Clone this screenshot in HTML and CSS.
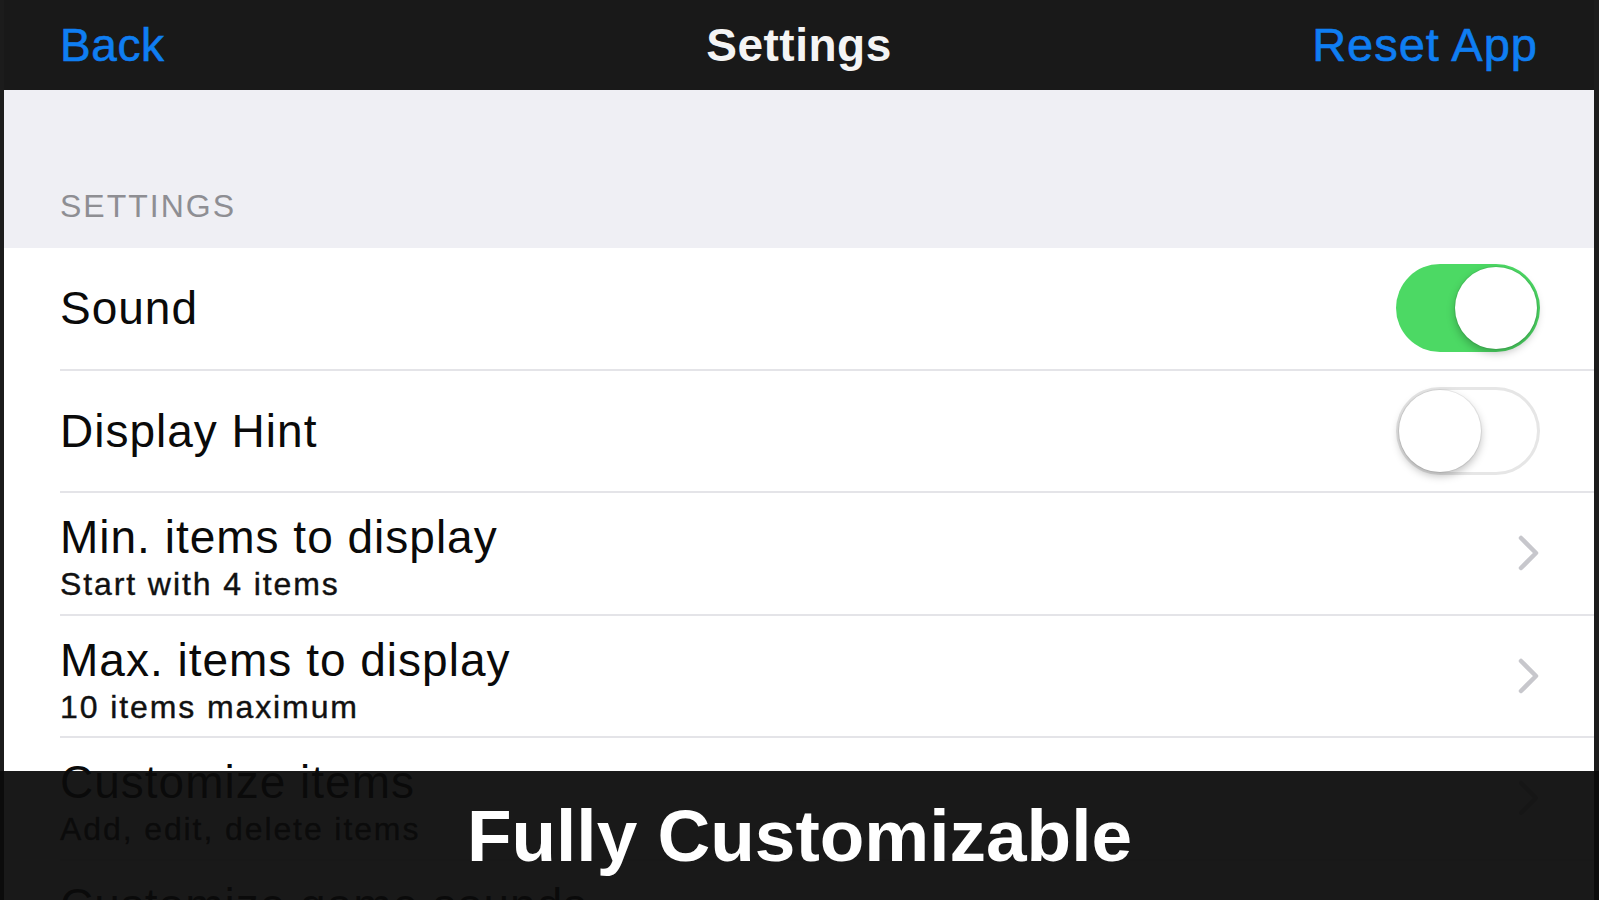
FILE: index.html
```html
<!DOCTYPE html>
<html lang="en">
<head>
<meta charset="utf-8">
<title>Settings</title>
<link rel="stylesheet" href="styles.css">
</head>
<body>
<div class="screen">
  <header class="navbar">
    <span class="nav-btn nav-left">Back</span>
    <span class="nav-title">Settings</span>
    <span class="nav-btn nav-right">Reset App</span>
  </header>
  <div class="section-header"><span>SETTINGS</span></div>
  <ul class="list">
    <li class="row">
      <div class="row-body">
        <span class="row-title">Sound</span>
        <span class="toggle on"><span class="knob"></span></span>
      </div>
    </li>
    <li class="row">
      <div class="row-body">
        <span class="row-title">Display Hint</span>
        <span class="toggle off"><span class="knob"></span></span>
      </div>
    </li>
    <li class="row">
      <div class="row-body">
        <div class="row-text">
          <div class="row-title">Min. items to display</div>
          <div class="row-sub">Start with 4 items</div>
        </div>
        <svg class="chevron" viewBox="0 0 24 38" width="24" height="38"><polyline points="4,4 19,19 4,34" fill="none" stroke="#c7c7cc" stroke-width="4.5" stroke-linecap="round" stroke-linejoin="round"/></svg>
      </div>
    </li>
    <li class="row">
      <div class="row-body">
        <div class="row-text">
          <div class="row-title">Max. items to display</div>
          <div class="row-sub">10 items maximum</div>
        </div>
        <svg class="chevron" viewBox="0 0 24 38" width="24" height="38"><polyline points="4,4 19,19 4,34" fill="none" stroke="#c7c7cc" stroke-width="4.5" stroke-linecap="round" stroke-linejoin="round"/></svg>
      </div>
    </li>
    <li class="row">
      <div class="row-body">
        <div class="row-text">
          <div class="row-title">Customize items</div>
          <div class="row-sub">Add, edit, delete items</div>
        </div>
        <svg class="chevron" viewBox="0 0 24 38" width="24" height="38"><polyline points="4,4 19,19 4,34" fill="none" stroke="#c7c7cc" stroke-width="4.5" stroke-linecap="round" stroke-linejoin="round"/></svg>
      </div>
    </li>
    <li class="row">
      <div class="row-body">
        <div class="row-text">
          <div class="row-title">Customize game sounds</div>
          <div class="row-sub">Choose sounds</div>
        </div>
        <svg class="chevron" viewBox="0 0 24 38" width="24" height="38"><polyline points="4,4 19,19 4,34" fill="none" stroke="#c7c7cc" stroke-width="4.5" stroke-linecap="round" stroke-linejoin="round"/></svg>
      </div>
    </li>
  </ul>
</div>
<div class="banner">Fully Customizable</div>
</body>
</html>
```

FILE: styles.css
```css
* { box-sizing: border-box; }

html, body {
  margin: 0;
  padding: 0;
}

body {
  width: 1599px;
  height: 900px;
  overflow: hidden;
  background: #1c1c1c;
  font-family: "Liberation Sans", Arial, Helvetica, sans-serif;
  position: relative;
}

.screen {
  margin: 0 5px 0 4px;
  height: 900px;
  overflow: hidden;
  background: #ffffff;
}

.navbar {
  height: 90px;
  background: #191919;
  display: grid;
  grid-template-columns: 1fr auto 1fr;
  align-items: center;
  margin: 0 -5px 0 -4px;
  padding: 0 61px 0 60px;
}

.nav-btn {
  font-size: 46px;
  line-height: 52px;
  color: #0f7ef2;
  letter-spacing: 0.6px;
  -webkit-text-stroke: 0.6px #0f7ef2;
}

.nav-right {
  justify-self: end;
  font-size: 47px;
  letter-spacing: 1px;
}

.nav-title {
  font-size: 46px;
  line-height: 52px;
  font-weight: bold;
  color: #f4f4f4;
  letter-spacing: 0.5px;
}

.section-header {
  height: 158px;
  background: #efeff4;
  display: flex;
  align-items: flex-end;
  padding: 0 0 26px 56px;
}

.section-header span {
  font-size: 32px;
  line-height: 32px;
  color: #8e8e93;
  letter-spacing: 2px;
}

.list {
  list-style: none;
  margin: 0;
  padding: 0;
  background: #ffffff;
}

.row {
  height: 122.5px;
  padding-left: 56px;
}

.row-body {
  height: 100%;
  display: flex;
  align-items: center;
  justify-content: space-between;
  padding-right: 54px;
  border-bottom: 2px solid #e4e4e8;
}

.row-title {
  font-size: 46px;
  line-height: 52px;
  color: #0a0a0a;
  letter-spacing: 1px;
}

.row-text {
  align-self: flex-start;
  padding-top: 18px;
}

.row-sub {
  font-size: 32px;
  line-height: 42px;
  color: #111111;
  letter-spacing: 1.9px;
  -webkit-text-stroke: 0.4px #111111;
}

.chevron {
  display: block;
  margin-right: -1px;
}

.toggle {
  width: 144px;
  height: 88px;
  border-radius: 44px;
  padding: 3px;
  display: flex;
  align-items: center;
}

.toggle.on {
  background: #4cd964;
  justify-content: flex-end;
}

.toggle.off {
  background: #ffffff;
  box-shadow: inset 0 0 0 3px #e6e6e6;
  justify-content: flex-start;
}

.knob {
  width: 82px;
  height: 82px;
  border-radius: 50%;
  background: #ffffff;
  box-shadow: 0 4px 8px rgba(0, 0, 0, 0.25), 0 0 0 1px rgba(0, 0, 0, 0.07);
}

.banner {
  position: absolute;
  left: 0;
  right: 0;
  top: 771px;
  bottom: 0;
  background: rgba(11, 11, 11, 0.94);
  display: flex;
  align-items: center;
  justify-content: center;
  color: #ffffff;
  font-weight: bold;
  font-size: 73px;
  line-height: 73px;
  letter-spacing: 0;
}
```
